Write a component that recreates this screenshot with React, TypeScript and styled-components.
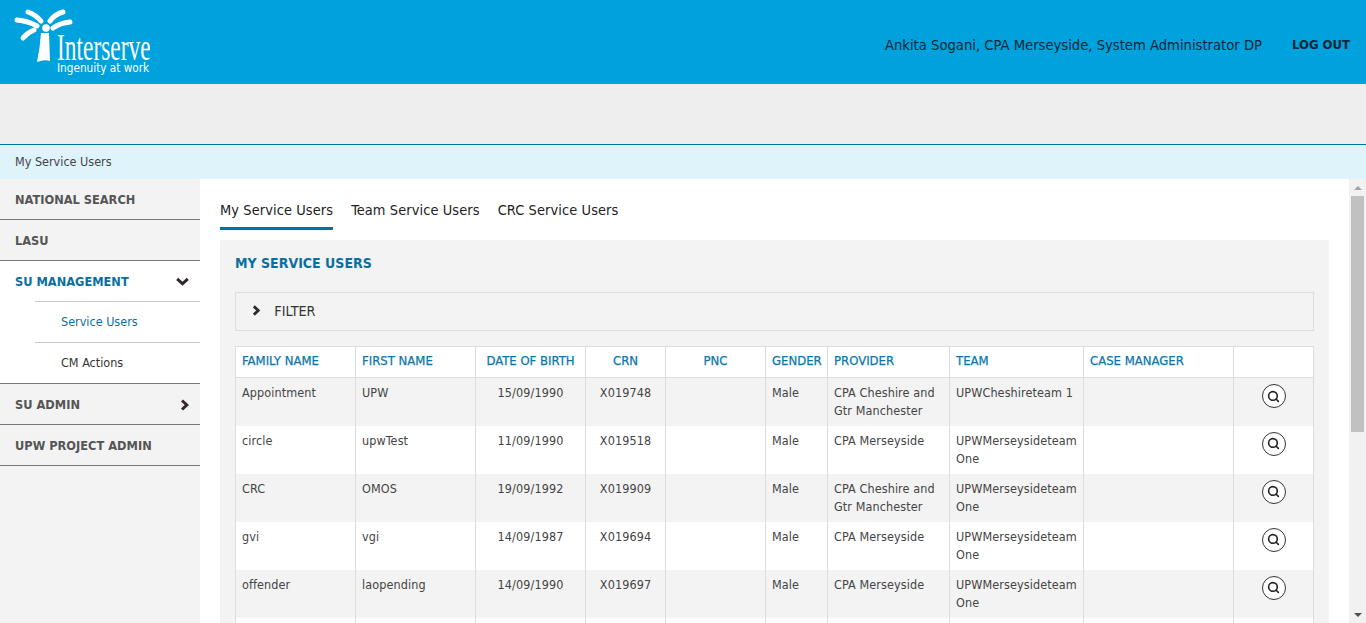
import React from "react";
import styled, { createGlobalStyle } from "styled-components";
import { Search } from "lucide-react";

const FONT = `"DejaVu Sans Condensed", "Noto Sans", "Liberation Sans", sans-serif`;

const Global = createGlobalStyle`
  html, body { margin: 0; padding: 0; height: 100%; overflow: hidden; }
  body { font-family: ${FONT}; font-size: 12.5px; color: #444; background: #fff; }
  * { box-sizing: border-box; }
`;

const Page = styled.div`
  display: flex;
  flex-direction: column;
  height: 100vh;
`;

const Header = styled.header`
  flex: none;
  height: 84px;
  background: #00a2de;
  display: flex;
  align-items: center;
  justify-content: space-between;
  padding: 0 16px 0 15px;
`;

const LogoSvg = styled.svg`
  display: block;
  width: 150px;
  height: 84px;
  margin-left: -15px;
  flex: none;
`;

const HeaderRight = styled.div`
  display: flex;
  align-items: center;
  gap: 30px;
  padding-top: 4px;
  color: #0b2634;
`;

const UserName = styled.span`
  font-size: 14.65px;
`;

const LogOut = styled.a`
  font-size: 13px;
  font-weight: 700;
`;

const Band = styled.div`
  flex: none;
  height: 60px;
  background: #eeeeee;
`;

const Crumb = styled.div`
  flex: none;
  height: 35px;
  border-top: 1px solid #0072a3;
  background: #dff3fb;
  padding: 0 15px 2px;
  display: flex;
  align-items: center;
  font-size: 12.5px;
  color: #444;
`;

const Body = styled.div`
  flex: 1;
  min-height: 0;
  display: flex;
`;

const Sidebar = styled.nav`
  flex: none;
  width: 200px;
  background: #f3f3f3;
`;

const NavItem = styled.div<{ $active?: boolean }>`
  height: ${(p) => (p.$active ? "40px" : "41px")};
  padding: 1px 11px 0 15px;
  display: flex;
  align-items: center;
  justify-content: space-between;
  font-size: 12.7px;
  font-weight: 700;
  color: ${(p) => (p.$active ? "#0a6f9f" : "#555")};
  border-bottom: ${(p) => (p.$active ? "none" : "1px solid #777")};
  background: ${(p) => (p.$active ? "#fff" : "transparent")};
`;

const SubMenu = styled.div`
  background: #fff;
  padding-left: 35px;
  border-bottom: 1px solid #777;
`;

const SubItem = styled.div<{ $active?: boolean }>`
  height: 41px;
  padding: 0 0 2px 26px;
  display: flex;
  align-items: center;
  font-size: 12.5px;
  color: ${(p) => (p.$active ? "#0a6f9f" : "#333")};
  border-top: 1px solid #ccc;
`;

const Content = styled.main`
  flex: 1;
  min-width: 0;
  overflow: hidden;
  padding: 0 20px 20px;
  background: #fff;
`;

const ScrollRail = styled.div`
  flex: none;
  width: 17px;
  background: #f1f1f1;
  display: flex;
  flex-direction: column;
  align-items: center;
`;

const ArrowSlot = styled.div`
  flex: none;
  height: 17px;
  width: 100%;
  display: flex;
  align-items: center;
  justify-content: center;
`;

const ArrowUp = styled.span`
  width: 0;
  height: 0;
  border-left: 4px solid transparent;
  border-right: 4px solid transparent;
  border-bottom: 4px solid #a3a3a3;
`;

const ArrowDown = styled.span`
  width: 0;
  height: 0;
  border-left: 4px solid transparent;
  border-right: 4px solid transparent;
  border-top: 4px solid #505050;
`;

const Thumb = styled.div`
  flex: none;
  width: 13px;
  height: 236px;
  background: #c1c1c1;
`;

const RailSpace = styled.div`
  flex: 1;
`;

const Tabs = styled.div`
  display: flex;
  gap: 18px;
  height: 51px;
  padding-top: 21px;
`;

const Tab = styled.a<{ $active?: boolean }>`
  font-size: 14.45px;
  letter-spacing: 0.1px;
  color: #222;
  height: 30px;
  padding-top: 2px;
  border-bottom: ${(p) => (p.$active ? "3px solid #0072a3" : "none")};
`;

const Panel = styled.section`
  margin-top: 10px;
  background: #f3f3f3;
  padding: 15px;
`;

const Title = styled.h2`
  margin: 0;
  font-size: 14px;
  line-height: 17px;
  font-weight: 700;
  color: #0a6f9f;
`;

const FilterBar = styled.div`
  margin-top: 20px;
  height: 39px;
  border: 1px solid #ddd;
  display: flex;
  align-items: center;
  padding: 0 0 2px 16px;
  gap: 14px;
  font-size: 14.3px;
  color: #333;
`;

const Table = styled.table`
  margin-top: 15px;
  width: 1078px;
  table-layout: fixed;
  border-collapse: collapse;
  border: 1px solid #ddd;
`;

const HeadCell = styled.th<{ $center?: boolean }>`
  height: 31px;
  padding: 0 6px 4px;
  background: #fff;
  border: 1px solid #ddd;
  font-size: 13px;
  font-weight: 400;
  color: #0a76ab;
  text-align: ${(p) => (p.$center ? "center" : "left")};
  -webkit-text-stroke: 0.25px #0a76ab;
`;

const Row = styled.tr<{ $shade: boolean }>`
  height: 48px;
  background: ${(p) => (p.$shade ? "#f3f3f3" : "#fff")};
`;

const Cell = styled.td<{ $center?: boolean }>`
  padding: 6px 6px 0;
  vertical-align: top;
  line-height: 18px;
  font-size: 12.5px;
  letter-spacing: 0.1px;
  color: #444;
  border-left: 1px solid #ddd;
  border-right: 1px solid #ddd;
  text-align: ${(p) => (p.$center ? "center" : "left")};
`;

const ViewButton = styled.button`
  margin: 0 auto;
  padding: 0;
  width: 24px;
  height: 24px;
  border: 1px solid #333;
  border-radius: 50%;
  background: #fff;
  color: #222;
  display: flex;
  align-items: center;
  justify-content: center;
`;

const LogoWord = styled.text`
  font-family: "Liberation Serif", serif;
  font-size: 38px;
  fill: #fff;
`;

const LogoTag = styled.text`
  font-family: ${FONT};
  font-size: 11.7px;
  fill: #fff;
`;

const Logo = () => (
  <LogoSvg viewBox="0 0 150 84" aria-label="Interserve">
    <g stroke="#fff" strokeLinecap="round" fill="none">
      <path d="M28 12 Q36 15 41 21" strokeWidth="5" />
      <path d="M17 20 Q28 21 37 26" strokeWidth="5" />
      <path d="M23 38 Q27 33 34 30" strokeWidth="5" />
      <path d="M63 12 Q55 14 50 21" strokeWidth="5" />
      <path d="M70 22 Q60 23 53 28" strokeWidth="5" />
    </g>
    <circle cx="46" cy="28" r="3.8" fill="#fff" />
    <path d="M41 33 H49 L50 61 Q44 59 37 62 Q40 48 41 33Z" fill="#fff" />
    <LogoWord x="57" y="60" transform="translate(57 0) scale(0.617 1) translate(-57 0)">Interserve</LogoWord>
    <LogoTag x="57" y="72">Ingenuity at work</LogoTag>
  </LogoSvg>
);

const ChevronRight = ({ size }: { size: number }) => (
  <svg width={size * 0.75} height={size} viewBox="0 0 9 12" aria-hidden="true">
    <path d="M2 1.5 L6.8 6 L2 10.5" fill="none" stroke="#2f2a28" strokeWidth="3" />
  </svg>
);

const ChevronDown = () => (
  <svg width="13" height="9" viewBox="0 0 13 9" aria-hidden="true">
    <path d="M1.2 1.8 L6.5 6.8 L11.8 1.8" fill="none" stroke="#2f2a28" strokeWidth="3" />
  </svg>
);

const columns: { label: string; width: number; center?: boolean }[] = [
  { label: "FAMILY NAME", width: 120 },
  { label: "FIRST NAME", width: 120 },
  { label: "DATE OF BIRTH", width: 110, center: true },
  { label: "CRN", width: 80, center: true },
  { label: "PNC", width: 100, center: true },
  { label: "GENDER", width: 62 },
  { label: "PROVIDER", width: 122 },
  { label: "TEAM", width: 134 },
  { label: "CASE MANAGER", width: 150 },
  { label: "", width: 80 },
];

const rows = [
  ["Appointment", "UPW", "15/09/1990", "X019748", "", "Male", "CPA Cheshire and Gtr Manchester", "UPWCheshireteam 1", ""],
  ["circle", "upwTest", "11/09/1990", "X019518", "", "Male", "CPA Merseyside", "UPWMerseysideteam One", ""],
  ["CRC", "OMOS", "19/09/1992", "X019909", "", "Male", "CPA Cheshire and Gtr Manchester", "UPWMerseysideteam One", ""],
  ["gvi", "vgi", "14/09/1987", "X019694", "", "Male", "CPA Merseyside", "UPWMerseysideteam One", ""],
  ["offender", "laopending", "14/09/1990", "X019697", "", "Male", "CPA Merseyside", "UPWMerseysideteam One", ""],
];

export default function App() {
  return (
    <Page>
      <Global />
      <Header>
        <Logo />
        <HeaderRight>
          <UserName>Ankita Sogani, CPA Merseyside, System Administrator DP</UserName>
          <LogOut>LOG OUT</LogOut>
        </HeaderRight>
      </Header>
      <Band />
      <Crumb>My Service Users</Crumb>
      <Body>
        <Sidebar>
          <NavItem>NATIONAL SEARCH</NavItem>
          <NavItem>LASU</NavItem>
          <NavItem $active>
            SU MANAGEMENT
            <ChevronDown />
          </NavItem>
          <SubMenu>
            <SubItem $active>Service Users</SubItem>
            <SubItem>CM Actions</SubItem>
          </SubMenu>
          <NavItem>
            SU ADMIN
            <ChevronRight size={12} />
          </NavItem>
          <NavItem>UPW PROJECT ADMIN</NavItem>
        </Sidebar>
        <Content>
          <Tabs>
            <Tab $active>My Service Users</Tab>
            <Tab>Team Service Users</Tab>
            <Tab>CRC Service Users</Tab>
          </Tabs>
          <Panel>
            <Title>MY SERVICE USERS</Title>
            <FilterBar>
              <ChevronRight size={11} />
              FILTER
            </FilterBar>
            <Table>
              <colgroup>
                {columns.map((c, i) => (
                  <col key={i} style={{ width: c.width }} />
                ))}
              </colgroup>
              <thead>
                <tr>
                  {columns.map((c, i) => (
                    <HeadCell key={i} $center={c.center}>{c.label}</HeadCell>
                  ))}
                </tr>
              </thead>
              <tbody>
                {rows.map((r, i) => (
                  <Row key={i} $shade={i % 2 === 0}>
                    {r.map((v, j) => (
                      <Cell key={j} $center={columns[j].center}>{v}</Cell>
                    ))}
                    <Cell>
                      <ViewButton aria-label="View">
                        <Search size={13} strokeWidth={3} />
                      </ViewButton>
                    </Cell>
                  </Row>
                ))}
                <Row $shade={false}>
                  {columns.map((_, j) => (
                    <Cell key={j} />
                  ))}
                </Row>
              </tbody>
            </Table>
          </Panel>
        </Content>
        <ScrollRail>
          <ArrowSlot><ArrowUp /></ArrowSlot>
          <Thumb />
          <RailSpace />
          <ArrowSlot><ArrowDown /></ArrowSlot>
        </ScrollRail>
      </Body>
    </Page>
  );
}
